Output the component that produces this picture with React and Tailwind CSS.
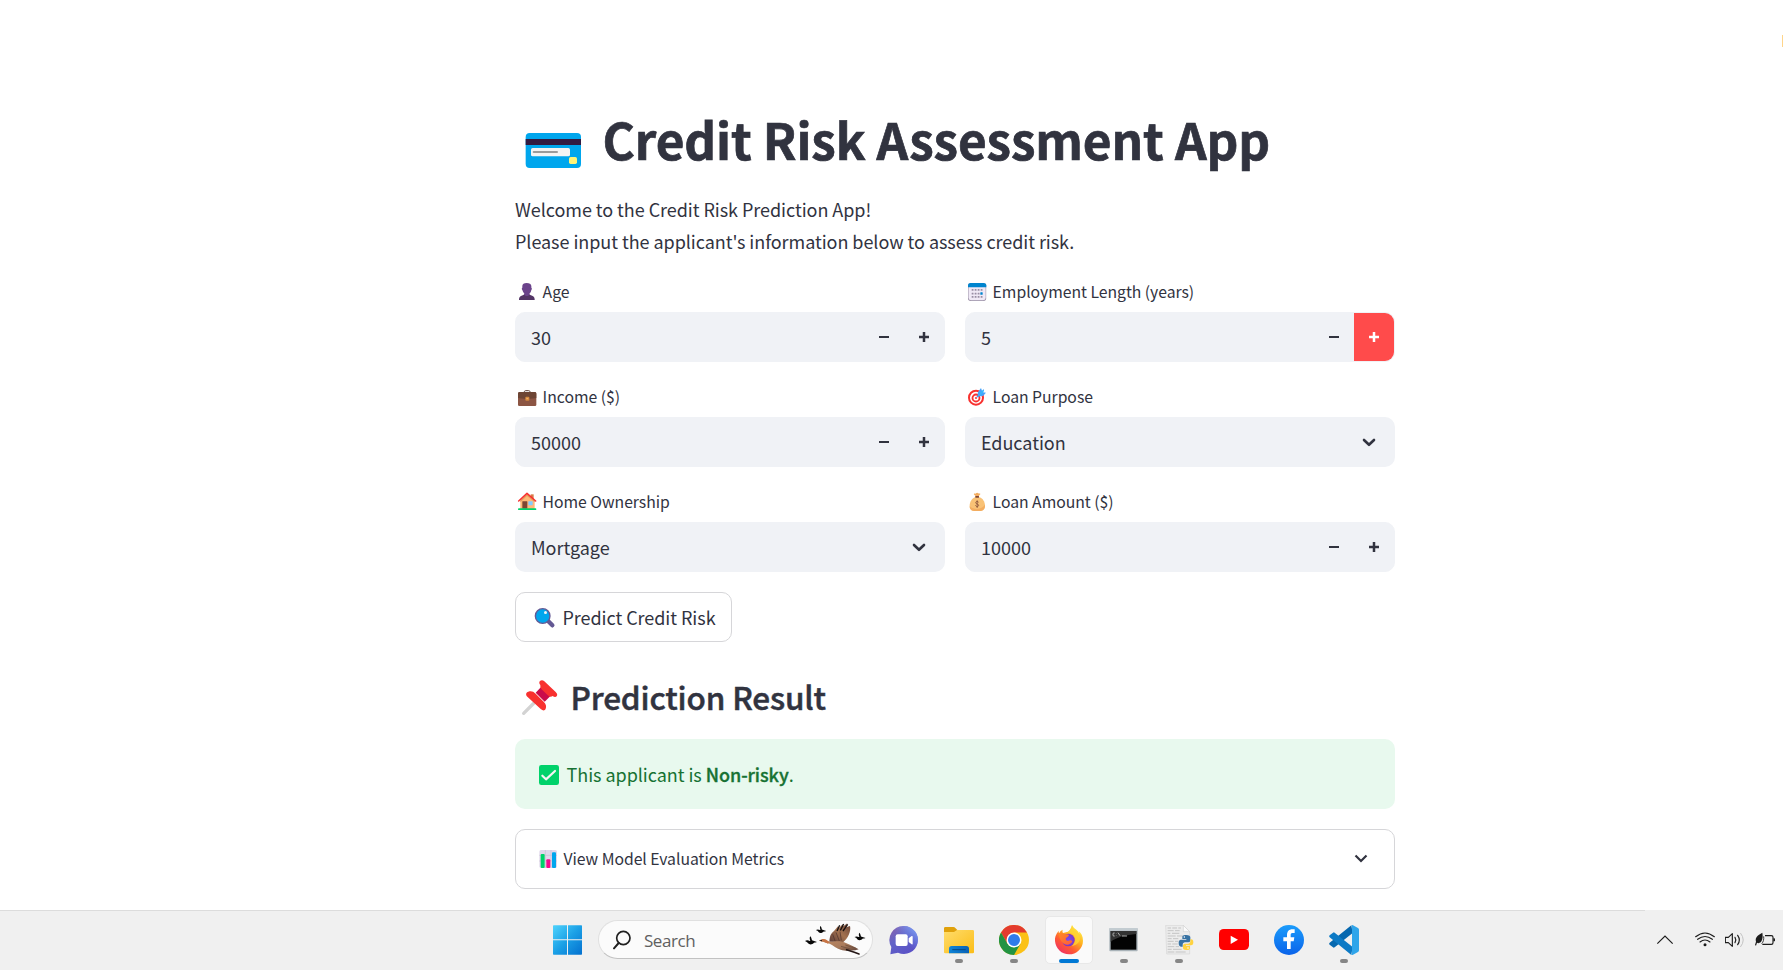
const SANS = "font-['Noto_Sans_CJK_SC','Noto_Sans_CJK_JP',sans-serif]";

/* ---------- pictograms ---------- */

const CardIcon = () => (
  <svg className="h-[66px] w-[87.5px] shrink-0" viewBox="45 15 262.5 198">
    <rect x="77" y="99" width="166" height="105" rx="12" fill="#00a6ed" />
    <rect x="77" y="117" width="166" height="18" fill="#321b41" />
    <rect x="93" y="144" width="117" height="25" rx="5" fill="#f4f4f4" />
    <rect x="98" y="153" width="76" height="6" rx="3" fill="#9b9b9b" />
    <rect x="207" y="171" width="24" height="21" rx="5" fill="#fff478" />
  </svg>
);

const PersonIcon = () => (
  <svg className="h-5 w-[27px] shrink-0" viewBox="45 33 81 60">
    <path d="M57 90v-2c0-7 5-11 13-13l4-3h13l4 3c8 2 13 6 13 13v2z" fill="#533566" />
    <path d="M73 66h15v8c-3 5-12 5-15 0z" fill="#6b438b" />
    <path d="M67 48c0-6 5-9 13-9s14 3 14 9v5c2 0 2 6 0 7-1 8-6 13-13 13s-12-5-14-13c-2-1-2-7 0-7z" fill="#6b438b" />
  </svg>
);

const CalendarIcon = () => (
  <svg className="h-5 w-[27px] shrink-0" viewBox="45 33 81 60">
    <rect x="54" y="39" width="54.500" height="54" rx="8" fill="#998ea4" />
    <rect x="55.500" y="39" width="51.500" height="51.500" rx="7" fill="#f0e9f6" />
    <path d="M54 52v-6c0-4 3-7 7-7h40c5 0 8 3 8 7v6z" fill="#0084ce" />
    <g fill="#998ea4">
      <rect x="74" y="57" width="5.500" height="5.500" rx="1" />
      <rect x="83" y="57" width="5.500" height="5.500" rx="1" />
      <rect x="92" y="57" width="5.500" height="5.500" rx="1" />
      <rect x="65" y="57" width="5.500" height="5.500" rx="1" />
      <rect x="65" y="68" width="5.500" height="5.500" rx="1" />
      <rect x="74" y="68" width="5.500" height="5.500" rx="1" />
      <rect x="83" y="68" width="5.500" height="5.500" rx="1" />
      <rect x="65" y="78" width="5.500" height="5.500" rx="1" />
      <rect x="74" y="78" width="5.500" height="5.500" rx="1" />
      <rect x="83" y="78" width="5.500" height="5.500" rx="1" />
      <rect x="92" y="78" width="5.500" height="5.500" rx="1" />
    </g>
    <rect x="91" y="67" width="7" height="7" rx="1.500" fill="#0084ce" />
  </svg>
);

const BriefcaseIcon = () => (
  <svg className="h-5 w-[27px] shrink-0 overflow-visible" viewBox="45 348 81 60">
    <path d="M73 367v-2c0-2 2-3 4-3h9c2 0 4 1 4 3v2" fill="none" stroke="#5b3c33" strokeWidth="3" />
    <rect x="54" y="367" width="55" height="41" rx="4" fill="#8c5543" />
    <path d="M54 384v-13c0-3 2-5 5-5h45c3 0 5 2 5 5v13c-8 3-46 3-55 0z" fill="#6d4534" />
    <rect x="76" y="380" width="12" height="12" rx="3" fill="#d3883e" />
    <rect x="79" y="384" width="6" height="4" rx="1" fill="#f3ad61" />
  </svg>
);

const TargetIcon = () => (
  <svg className="h-5 w-[27px] shrink-0 overflow-visible" viewBox="45 348 81 60">
    <circle cx="78" cy="383" r="21" fill="#fff" stroke="#f8312f" strokeWidth="6" />
    <circle cx="78" cy="384" r="10.500" fill="#fff" stroke="#f8312f" strokeWidth="5.500" />
    <circle cx="78" cy="384" r="3" fill="#f8312f" />
    <path d="M80 382l13-13" stroke="#5092ff" strokeWidth="3.500" />
    <path d="M84 366l9-12 3 8 5-5 1 6-3 4 9 1-9 10-9 1-5 1-2-7z" fill="#46a4fb" />
    <path d="M86 378l14-16" stroke="#26c9fc" strokeWidth="3" strokeLinecap="round" />
  </svg>
);

const HouseIcon = () => (
  <svg className="h-5 w-[27px] shrink-0 overflow-visible" viewBox="45 63 81 60">
    <path d="M92 73h9v17h-9z" fill="#d67d4a" />
    <path d="M61 118V93l20-20 23 20v25z" fill="#ffb977" />
    <path d="M61 97l20-19 23 19v-6L82 72 61 90z" fill="#e39d5d" />
    <rect x="67" y="94" width="15" height="22" rx="1" fill="#7d4533" />
    <rect x="85" y="94" width="13" height="12" rx="1.500" fill="#83cbff" />
    <path d="M56 93l25-23 26 23" fill="none" stroke="#f8312f" strokeWidth="4.500" strokeLinecap="round" strokeLinejoin="round" />
    <rect x="54" y="115" width="55" height="5" rx="2.500" fill="#00d26a" />
  </svg>
);

const MoneyIcon = () => (
  <svg className="h-5 w-[27px] shrink-0 overflow-visible" viewBox="45 63 81 60">
    <path d="M72 71c3-1 5 1 6-1 2-2 5-2 7 0 2 2 5-1 6 2 0 2-3 3-4 5v5H76v-5c-2-2-6-4-4-6z" fill="#f3ad61" />
    <path d="M75 82h14c9 3 16 14 16 25 0 11-6 16-14 16H73c-8 0-14-5-14-16 0-11 7-22 16-25z" fill="#f9c276" />
    <path d="M105 104c1 13-7 19-14 19H73c-8 0-14-4-14-14 8 10 34 12 46-5z" fill="#f3ad61" />
    <rect x="76" y="78" width="11" height="5" rx="1.500" fill="#7d4533" />
    <path d="M86 97c-2-4-9-3-9 1 0 5 9 3 9 8 0 4-8 5-10 0M81.500 91v23" fill="none" stroke="#7d4533" strokeWidth="2.200" />
  </svg>
);

const MagnifierIcon = () => (
  <svg className="h-6 w-[46.5px] shrink-0" viewBox="48 405 139.5 72">
    <path d="M142 451l15 15" stroke="#635994" strokeWidth="13" strokeLinecap="round" />
    <circle cx="128" cy="438" r="22" fill="#00a6ed" stroke="#635994" strokeWidth="4" />
    <circle cx="136.500" cy="427.500" r="4.500" fill="#f4f4f4" />
  </svg>
);

const PinIcon = () => (
  <svg className="h-[42px] w-[55.5px] shrink-0" viewBox="45 30 166.5 126">
    <path d="M71 145l34-34" stroke="#d3d3d3" strokeWidth="10" strokeLinecap="round" />
    <path d="M107 83l17-18 28 27-18 18z" fill="#ca0b4a" />
    <path d="M82 95c-6-6-4-13 3-15 8-3 15-1 22 6l24 24c7 7 9 14 6 21-2 6-8 7-14 2z" fill="#f8312f" />
    <path d="M121 60c-4-4-4-9-1-12 4-4 9-3 13 1l34 32c5 5 6 9 3 13-3 3-8 2-12-1-4 3-9 3-13-1l-19-18c-5-4-5-9-5-14z" fill="#f8312f" />
  </svg>
);

const CheckIcon = () => (
  <svg className="h-6 w-[51.5px] shrink-0" viewBox="45 291 154.5 72">
    <rect x="117" y="300" width="60" height="60" rx="7" fill="#00d26a" />
    <path d="M127 332l11 11 27-25" fill="none" stroke="#f4f4f4" strokeWidth="6.500" strokeLinecap="round" strokeLinejoin="round" />
  </svg>
);

const ChartIcon = () => (
  <svg className="h-5 w-[47.5px] shrink-0 overflow-visible" viewBox="48 549 142.5 60">
    <rect x="118" y="555" width="53" height="54" rx="5" fill="#e1d8ec" />
    <path d="M136 555v54M153 555v54M118 571h53M118 588h53" stroke="#cdc4d6" strokeWidth="2.500" />
    <rect x="122" y="567" width="12" height="42" rx="3" fill="#00d26a" />
    <rect x="139" y="583" width="12" height="26" rx="3" fill="#f70a8d" />
    <rect x="156" y="562" width="12" height="47" rx="3" fill="#00a6ed" />
  </svg>
);

/* ---------- form parts ---------- */

const MinusIcon = () => (
  <svg className="h-[10px] w-[10px]" viewBox="0 0 10 10">
    <path d="M0 5h10" stroke="currentColor" strokeWidth="2" />
  </svg>
);
const PlusIcon = () => (
  <svg className="h-[10px] w-[10px]" viewBox="0 0 10 10">
    <path d="M0 5h10M5 0v10" stroke="currentColor" strokeWidth="2.5" />
  </svg>
);

function Label({ icon, text }) {
  return (
    <div className="flex h-5 text-[15.75px] leading-[22px] tracking-[-0.03px]">
      {icon}
      <span className="pl-[0.6px] whitespace-nowrap">{text}</span>
    </div>
  );
}

function NumberField({ icon, label, value, active }) {
  return (
    <div>
      <Label icon={icon} text={label} />
      <div className="mt-[11px] flex h-[50px] rounded-[10px] border border-[#f0f2f6] bg-[#f0f2f6]">
        <div className="flex-1 pl-[15px] text-[18px] leading-[48px]">{value}</div>
        <button className="flex w-10 items-center justify-center">
          <MinusIcon />
        </button>
        <button
          className={
            active
              ? "flex w-10 items-center justify-center rounded-r-[9px] bg-[#ff4b4b] text-white"
              : "flex w-10 items-center justify-center rounded-r-[9px]"
          }
        >
          <PlusIcon />
        </button>
      </div>
    </div>
  );
}

function SelectField({ icon, label, value }) {
  return (
    <div>
      <Label icon={icon} text={label} />
      <div className="mt-[11px] flex h-[50px] items-center rounded-[10px] bg-[#f0f2f6] pr-[19px]">
        <div className="flex-1 pl-4 text-[18px] leading-[52px] tracking-[-0.04px]">{value}</div>
        <svg className="h-[9px] w-[14px]" viewBox="0 0 14 9">
          <path d="M2 2l5 4.800L12 2" fill="none" stroke="currentColor" strokeWidth="2.600" strokeLinecap="round" strokeLinejoin="round" />
        </svg>
      </div>
    </div>
  );
}

/* ---------- taskbar ---------- */

const WindowsIcon = () => (
  <svg className="h-[30px] w-[30px]" viewBox="39 62 90 90">
    <defs>
      <linearGradient id="win" gradientUnits="userSpaceOnUse" x1="39" y1="63" x2="126" y2="150">
        <stop offset="0" stopColor="#4fd3fc" />
        <stop offset=".5" stopColor="#1ba0e6" />
        <stop offset="1" stopColor="#0471cf" />
      </linearGradient>
    </defs>
    <path d="M39 65q0-2 2-2h40v42H39zM84 63h40q2 0 2 2v40H84zM39 108h42v43H41q-2 0-2-2zM84 108h42v41q0 2-2 2H84z" fill="url(#win)" />
  </svg>
);

const SmallBird = ({ transform }) => (
  <g transform={transform}>
    <path d="M-19-1c6-4 11-1 14 0l2-1c-2-5-3-9 0-13 3 3 4 8 5 12l15 5c-3 2-6 1-9 2-5 6-13 7-18 2-2-4-5-5-9-7z" fill="#080808" />
  </g>
);

const GooseIcon = () => (
  <svg className="h-[34px] w-[63px]" viewBox="794 56 189 102">
    <defs>
      <linearGradient id="wing" x1="0" y1="1" x2="1" y2="0">
        <stop offset="0" stopColor="#5b3b36" />
        <stop offset=".5" stopColor="#a3714f" />
        <stop offset="1" stopColor="#6a4236" />
      </linearGradient>
      <linearGradient id="bodyfill" x1="0" y1="0" x2="1" y2="1">
        <stop offset="0" stopColor="#c08a62" />
        <stop offset=".6" stopColor="#a87a5c" />
        <stop offset="1" stopColor="#5d4138" />
      </linearGradient>
    </defs>
    <SmallBird transform="translate(816 111)" />
    <SmallBird transform="translate(846 78) scale(.85)" />
    <SmallBird transform="translate(963 99) scale(.92)" />
    <path d="M870 112c2-18 4-24 14-32l12-14 2 6 12-12 2 6 12-9-4 12 12-4c4 14-6 38-20 48z" fill="url(#wing)" />
    <path d="M893 80l8-17M903 78l10-19M911 80l14-20" stroke="#171010" strokeWidth="4" />
    <path d="M880 90l8 22M890 84l10 26M902 82l4 26" stroke="#4a2f2b" strokeWidth="2" />
    <path d="M839 108l10-3c8-2 13 2 18 6 10 4 20-2 34 0 18 3 36 12 57 24l-10 3c-14 1-30 3-44-2-14-4-21-13-33-18-8-2-15-5-24-6z" fill="url(#bodyfill)" />
    <path d="M847 105c8-3 15 2 22 7l-3 6c-6-2-10-5-17-8z" fill="#c87445" />
    <path d="M839 109l9-3v5z" fill="#2b1b18" />
    <path d="M922 136l23 8 14 5" stroke="#241615" strokeWidth="5" strokeLinecap="round" fill="none" />
    <path d="M918 122l32 10M905 126l28 8" stroke="#70503f" strokeWidth="2.500" />
  </svg>
);

const ChatIcon = () => (
  <svg className="h-[30px] w-[30px]" viewBox="1045 60 90 90">
    <defs>
      <linearGradient id="chat" x1="0" y1="0" x2=".7" y2="1">
        <stop offset="0" stopColor="#8f62a8" />
        <stop offset=".45" stopColor="#6264c8" />
        <stop offset="1" stopColor="#5a50c6" />
      </linearGradient>
      <linearGradient id="chat2" x1="0" y1="1" x2="1" y2="0">
        <stop offset=".5" stopColor="#6f8cf0" stopOpacity="0" />
        <stop offset="1" stopColor="#86b0ff" />
      </linearGradient>
    </defs>
    <path d="M1090 63a42 42 0 1 1-18 80l-23 5 3-22a42 42 0 0 1 38-63z" fill="url(#chat)" />
    <path d="M1090 63a42 42 0 1 1-18 80l-23 5 3-22a42 42 0 0 1 38-63z" fill="url(#chat2)" />
    <rect x="1065" y="88" width="36" height="35" rx="6" fill="#fff" />
    <path d="M1104 100l9-7q3-1 3 2v21q0 3-3 2l-9-7z" fill="#fff" />
  </svg>
);

const FolderIcon = () => (
  <svg className="h-[30px] w-[30px]" viewBox="42 60 90 90">
    <defs>
      <linearGradient id="fold" x1="0" y1="0" x2="1" y2="1">
        <stop offset="0" stopColor="#ffdc6b" />
        <stop offset="1" stopColor="#fbbd17" />
      </linearGradient>
      <linearGradient id="foldb" x1="0" y1="0" x2="1" y2="0">
        <stop offset="0" stopColor="#0f85d8" />
        <stop offset="1" stopColor="#0a62b6" />
      </linearGradient>
    </defs>
    <path d="M42 70q0-4 4-4h24q4 0 6 3l6 6v15H42z" fill="#e0a10b" />
    <path d="M42 81h30l9-6h47q4 0 4 4v63q0 3-4 3H46q-4 0-4-3z" fill="url(#fold)" />
    <path d="M57 145v-14q0-8 8-8h44q8 0 8 8v14z" fill="url(#foldb)" />
    <path d="M68 134h38" stroke="#064884" strokeWidth="3" strokeLinecap="round" />
  </svg>
);

const ChromeIcon = () => (
  <svg className="h-[30px] w-[30px]" viewBox="-45 -45 90 90">
    <circle r="45" fill="#fbc116" />
    <path d="M-39-22.500A45 45 0 0 1 39-22.500L0-22.500-19.500 11z" fill="#e33b2e" />
    <path d="M-39-22.500L-19.500 11.250 0 22.500 19.500 11.250 0 45A45 45 0 0 1-39-22.500z" fill="#229342" />
    <circle r="22.500" fill="#fff" />
    <circle r="18" fill="#2f7bea" />
  </svg>
);

const FirefoxIcon = () => (
  <svg className="h-[30px] w-[30px]" viewBox="372 60 90 90">
    <defs>
      <linearGradient id="fx" gradientUnits="userSpaceOnUse" x1="445" y1="66" x2="385" y2="145">
        <stop offset="0" stopColor="#fff34d" />
        <stop offset=".35" stopColor="#ffb01f" />
        <stop offset=".65" stopColor="#ff5a33" />
        <stop offset="1" stopColor="#ee2a6c" />
      </linearGradient>
      <radialGradient id="fxg">
        <stop offset="0" stopColor="#7a4ff0" />
        <stop offset="1" stopColor="#7a35c8" />
      </radialGradient>
      <linearGradient id="fxh" x1="0" y1="0" x2="1" y2="1">
        <stop offset="0" stopColor="#ff8a25" />
        <stop offset="1" stopColor="#ff5a3c" />
      </linearGradient>
    </defs>
    <path d="M426 60c-2 10-6 15-12 20l-15 4c-2-3-2-7-1-10-5 2-9 7-11 11-1-2-1-5-1-8-9 11-12 21-11 31 2 23 20 40 42 40s42-17 42-41c0-14-6-23-13-28 1 3 2 5 2 8-4-13-17-15-22-27z" fill="url(#fx)" />
    <circle cx="415" cy="105" r="19" fill="url(#fxg)" />
    <path d="M386 86c6-3 12-2 17 1 4 1 12 0 14 3 0 5-9 7-10 11 0 4 4 7 9 6 6-2 9-1 11 2-4 9-15 13-24 8-10-6-15-18-17-31z" fill="url(#fxh)" />
    <path d="M426 61c-3 12-9 18-14 22 12-1 20 6 22 14 4 10-1 21-9 26 12-1 22-8 25-20 2-18-20-22-24-42z" fill="#ffd735" opacity=".75" />
  </svg>
);

const TerminalIcon = () => (
  <svg className="h-[30px] w-[30px]" viewBox="537 60 90 90">
    <rect x="538" y="69" width="85" height="70" rx="3" fill="#a9b3b9" />
    <rect x="538" y="69" width="85" height="8" rx="2" fill="#c3ccd1" />
    <rect x="542" y="78" width="77" height="56" fill="#030303" />
    <path d="M542 78h77v9c-30 3-62 10-77 24z" fill="#333" />
    <path d="M554 84h-3q-2 0-2 3v3q0 3 2 3h3M559 86v1M559 91v1M564 83l6 9M576 93h15" fill="none" stroke="#ddd" strokeWidth="2.200" />
  </svg>
);

const PythonFileIcon = () => (
  <svg className="h-[30px] w-[30px]" viewBox="702 60 90 90">
    <path d="M707 61h53l19 19v67H710z" fill="#ececec" stroke="#cfcfcf" strokeWidth="1.500" />
    <path d="M760 61v19h19z" fill="#fafafa" stroke="#c8c8c8" strokeWidth="1.500" />
    <path d="M713 69h10m4 0h14m4 0h8M713 77h18m4 0h14M713 85h8m5 0h22M713 93h24m4 0h20M713 101h12m4 0h16M713 109h18m4 0h10M713 117h10m4 0h16M713 125h20m4 0h10M713 133h12m4 0h26M713 141h20m4 0h30" stroke="#bdbdbd" strokeWidth="2.500" />
    <path d="M768 90c-10 0-11 3-11 7v5h12v2h-16c-5 0-7 4-7 10s2 11 7 11h5v-6c0-4 3-7 7-7h10c4 0 6-3 6-6v-9c0-4-3-7-13-7z" fill="#3772a3" />
    <path d="M769 135c10 0 11-3 11-7v-5h-12v-2h15c5 0 7-4 7-9s-2-9-7-9h-2v6c0 4-3 7-7 7h-9c-4 0-6 3-6 6v7c0 4 3 6 10 6z" fill="#ffd340" />
    <circle cx="763" cy="96" r="2.200" fill="#fff" />
    <circle cx="774" cy="129" r="2.200" fill="#fff" />
  </svg>
);

const YoutubeIcon = () => (
  <svg className="h-[30px] w-[30px]" viewBox="867 60 90 90">
    <rect x="867" y="72" width="90" height="63" rx="14" fill="#f00" />
    <path d="M902 92l22 12-22 13z" fill="#fff" />
  </svg>
);

const FacebookIcon = () => (
  <svg className="h-[30px] w-[30px]" viewBox="1032 60 90 90">
    <defs>
      <linearGradient id="fb" x1="0" y1="0" x2="0" y2="1">
        <stop offset="0" stopColor="#1b9cfb" />
        <stop offset="1" stopColor="#0a63ea" />
      </linearGradient>
    </defs>
    <circle cx="1077" cy="105" r="45" fill="url(#fb)" />
    <path d="M1071 132v-23h-11V97h11v-6c0-12 6-18 16-18h7v11h-5c-5 0-7 2-7 6v7h11l-2 12h-9v23z" fill="#fff" />
  </svg>
);

const VscodeIcon = () => (
  <svg className="h-[30px] w-[30px]" viewBox="1197 60 90 90">
    <path d="M1264 61l4 23-54 43q-3 2-5 0l-10-8q-3-3 0-6z" fill="#0668af" />
    <path d="M1199 97q-3-3 0-6l10-8q3-2 5 0l54 43-4 24z" fill="#0d7ac5" />
    <path d="M1264 61q2-2 5 0l15 8q3 2 3 5v62q0 3-3 5l-15 8q-3 2-5 0 2 0 2-4V65q0-3-2-4z" fill="#2fa5ea" />
  </svg>
);

const Indicator = ({ state }) => {
  if (state === "active") return <div className="h-1 w-5 rounded-full bg-[#0078d4]" />;
  if (state === "open") return <div className="h-1 w-2 rounded-full bg-[#868686]" />;
  return <div className="h-1 w-2" />;
};

function TaskButton({ icon, state }) {
  return (
    <div
      className={
        state === "active"
          ? "flex h-12 w-12 flex-col items-center justify-between rounded-[5px] border border-[#e8e8e8] bg-[#fafafa] pt-2"
          : "flex h-12 w-12 flex-col items-center justify-between border border-transparent pt-2"
      }
    >
      {icon}
      <Indicator state={state} />
    </div>
  );
}

function Taskbar() {
  return (
    <footer className="flex h-[60px] shrink-0 bg-[#f0f0f0]">
      <div className="flex w-[1645px] border-t border-[#dcdcdc] pt-[5px] pl-[553px]">
        <div className="flex h-12 items-center">
          <WindowsIcon />
          <div className="mb-px ml-[15px] flex h-[39px] w-[275px] items-center rounded-full border border-[#e0e0e0] border-b-[#c2c2c2] bg-[#fbfbfb] pr-[5px] pl-[13px]">
            <svg className="h-[20px] w-[20px]" viewBox="216 75 60 60">
              <circle cx="250" cy="99" r="20" fill="none" stroke="#202020" strokeWidth="5" />
              <path d="M236 114l-14 16" stroke="#202020" strokeWidth="6" strokeLinecap="round" />
            </svg>
            <span className="mt-[2px] ml-3 flex-1 font-['Open_Sans','Noto_Sans',sans-serif] text-[17px] leading-6 tracking-[-0.45px] text-[#606060]">
              Search
            </span>
            <GooseIcon />
          </div>
          <div className="ml-[15.5px] flex h-[30px] w-[30px]">
            <ChatIcon />
          </div>
          <div className="ml-[16.5px] flex gap-[7px]">
            <TaskButton icon={<FolderIcon />} state="open" />
            <TaskButton icon={<ChromeIcon />} state="open" />
            <TaskButton icon={<FirefoxIcon />} state="active" />
            <TaskButton icon={<TerminalIcon />} state="open" />
            <TaskButton icon={<PythonFileIcon />} state="open" />
            <TaskButton icon={<YoutubeIcon />} />
            <TaskButton icon={<FacebookIcon />} />
            <TaskButton icon={<VscodeIcon />} state="open" />
          </div>
        </div>
      </div>
      <div className="ml-auto flex items-center pr-[6px] text-[#1c1c1c]">
        <svg className="h-[20px] w-[20px]" viewBox="45 75 60 60">
          <path d="M52 116l23-23 23 23" fill="none" stroke="currentColor" strokeWidth="3.500" />
        </svg>
        <svg className="ml-5 h-5 w-5" viewBox="165 75 60 60">
          <g fill="none" stroke="currentColor" strokeWidth="3.500" strokeLinecap="round">
            <path d="M167 95q28-22 56 0" />
            <path d="M173 103q22-17 44 0" />
            <path d="M180 111q15-12 30 0" />
          </g>
          <circle cx="195" cy="119" r="4.500" fill="currentColor" />
        </svg>
        <svg className="ml-[10px] h-5 w-5" viewBox="255 75 60 60">
          <path d="M256 97h9l12-11v38l-12-11h-9z" fill="none" stroke="currentColor" strokeWidth="3.500" strokeLinejoin="round" />
          <path d="M285 97q5 8 0 16M293 91q10 14 0 28" fill="none" stroke="currentColor" strokeWidth="3.500" strokeLinecap="round" />
          <path d="M302 85q16 20 0 40" fill="none" stroke="#c4c4c4" strokeWidth="3" strokeLinecap="round" />
        </svg>
        <svg className="ml-[10px] h-5 w-[22px]" viewBox="345 75 66 60">
          <path d="M375 92h19q5 0 5 5v16q0 5-5 5h-27" fill="none" stroke="currentColor" strokeWidth="3.500" />
          <path d="M400 100h3q2 0 2 2v5q0 2-2 2h-3z" fill="currentColor" />
          <path d="M367 83c2 11 1 23-5 29-4 3-8 3-11 1l-3 9-3-2 3-10c-4-14 7-20 19-27z" fill="currentColor" />
          <path d="M371 94c1 10-1 17-6 22" fill="none" stroke="currentColor" strokeWidth="2.500" />
        </svg>
      </div>
    </footer>
  );
}

export default function App() {
  return (
    <div className={`relative flex h-[970px] w-full flex-col overflow-hidden bg-white text-[#31333f] ${SANS}`}>
      <div className="absolute right-0 top-[35px] h-3 w-px bg-[#ffd58a]" />
      <main className="ml-[515px] flex w-[880px] flex-1 flex-col">
        <h1 className="mt-[105px] flex h-[66px] text-[49.5px] leading-[68px] font-bold tracking-[-0.13px] whitespace-nowrap [-webkit-text-stroke:0.7px_#31333f]">
          <CardIcon />
          <span>Credit Risk Assessment App</span>
        </h1>
        <p className="mt-[22px] text-[18px] leading-8 tracking-[-0.05px]">
          Welcome to the Credit Risk Prediction App!
          <br />
          Please input the applicant's information below to assess credit risk.
        </p>
        <div className="mt-6 grid grid-cols-2 gap-x-5 gap-y-6">
          <NumberField icon={<PersonIcon />} label="Age" value="30" />
          <NumberField icon={<CalendarIcon />} label="Employment Length (years)" value="5" active />
          <NumberField icon={<BriefcaseIcon />} label="Income ($)" value="50000" />
          <SelectField icon={<TargetIcon />} label="Loan Purpose" value="Education" />
          <SelectField icon={<HouseIcon />} label="Home Ownership" value="Mortgage" />
          <NumberField icon={<MoneyIcon />} label="Loan Amount ($)" value="10000" />
        </div>
        <button className="mt-5 flex h-[50px] w-[217px] items-center rounded-[10px] border border-[#d6d6d9] text-[18px] leading-6 tracking-[-0.05px]">
          <MagnifierIcon />
          <span className="whitespace-nowrap">Predict Credit Risk</span>
        </button>
        <h3 className="mt-[33px] flex h-[42px] items-center text-[31.5px] leading-[42px] font-medium tracking-[-0.15px] [-webkit-text-stroke:0.5px_#31333f]">
          <PinIcon />
          <span className="whitespace-nowrap">Prediction Result</span>
        </h3>
        <div className="mt-[22px] flex h-[70px] items-center rounded-[10px] bg-[#e8f9ee] text-[18px] leading-6 tracking-[-0.04px] text-[#177233]">
          <CheckIcon />
          <span>
            This applicant is{" "}
            <strong className="font-medium [-webkit-text-stroke:0.35px_#177233]">Non-risky</strong>.
          </span>
        </div>
        <div className="mt-5 flex h-[60px] items-center rounded-[10px] border border-[#d6d6d9] pr-[26px] pb-[2px] text-[15.75px] leading-5 tracking-[-0.04px]">
          <ChartIcon />
          <span className="flex-1 pt-[2px]">View Model Evaluation Metrics</span>
          <svg className="h-[9px] w-[14px]" viewBox="0 0 14 9">
            <path d="M1.500 1.500L7 7l5.500-5.500" fill="none" stroke="currentColor" strokeWidth="2.2" />
          </svg>
        </div>
      </main>
      <Taskbar />
    </div>
  );
}
